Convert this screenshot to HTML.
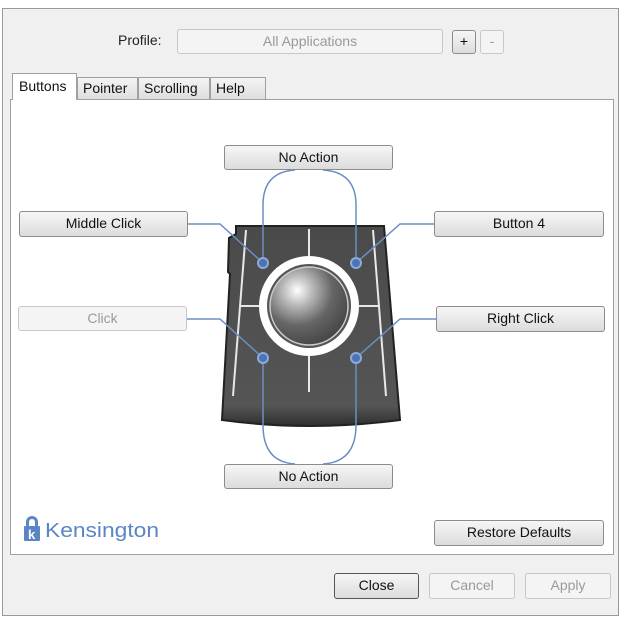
<!DOCTYPE html>
<html><head><style>
body{margin:0;width:624px;height:624px;background:#fff;font-family:"Liberation Sans",sans-serif;position:relative;overflow:hidden}
.win{position:absolute;left:2px;top:8px;width:617px;height:608px;background:#f0f0f0;border:1px solid #9a9a9a;box-sizing:border-box}
.panel{position:absolute;left:10px;top:99px;width:604px;height:456px;background:#fff;border:1px solid #a0a0a0;box-sizing:border-box}
.btn{position:absolute;box-sizing:border-box;border:1px solid #8c8c8c;border-radius:3px;background:linear-gradient(#f6f6f6,#dcdcdc);font-size:14px;color:#111;text-align:center;line-height:23px}
.dis{border-color:#c8c8c8;background:#f4f4f4;color:#9a9a9a}
.tab{position:absolute;top:77px;height:22px;box-sizing:border-box;border:1px solid #a0a0a0;border-bottom:none;background:linear-gradient(#f4f4f4,#dedede);font-size:14px;line-height:20px;padding-left:5px;color:#111}
.lbl{position:absolute;font-size:14px;color:#222}
</style></head><body>
<div class="win"></div>
<div class="lbl" style="left:118px;top:32px">Profile:</div>
<div class="btn dis" style="left:177px;top:29px;width:266px;height:25px;color:#999">All Applications</div>
<div class="btn" style="left:452px;top:30px;width:24px;height:24px;line-height:21px">+</div>
<div class="btn dis" style="left:480px;top:30px;width:24px;height:24px;line-height:21px">-</div>
<div class="panel"></div>
<div class="tab" style="left:77px;width:61px">Pointer</div>
<div class="tab" style="left:138px;width:72px">Scrolling</div>
<div class="tab" style="left:210px;width:56px">Help</div>
<div class="tab" style="left:12px;top:73px;height:27px;width:65px;background:#fff;padding-left:6px;line-height:24px">Buttons</div>
<svg style="position:absolute;left:0;top:0" width="624" height="624">
<defs>
<radialGradient id="ball" cx="0.35" cy="0.3" r="0.75"><stop offset="0" stop-color="#fff"/><stop offset="0.25" stop-color="#bbb"/><stop offset="0.6" stop-color="#666"/><stop offset="1" stop-color="#444"/></radialGradient>
<linearGradient id="body" x1="0" y1="0" x2="0" y2="1"><stop offset="0" stop-color="#4a4a4a"/><stop offset="0.9" stop-color="#555"/><stop offset="1" stop-color="#2e2e2e"/></linearGradient>
</defs>
<path d="M236 226 L384 226 L400 420 Q310 432 222 420 L230 274 L228 272 L229 238 L236 234 Z" fill="url(#body)" stroke="#222" stroke-width="2"/>
<g stroke="#e8e8e8" stroke-width="2" fill="none">
<line x1="246" y1="230" x2="233" y2="396"/><line x1="373" y1="230" x2="386" y2="396"/>
<line x1="309" y1="229" x2="309" y2="258"/><line x1="309" y1="354" x2="309" y2="392"/>
<line x1="240" y1="306" x2="260" y2="306"/><line x1="358" y1="306" x2="380" y2="306"/>
</g>
<circle cx="309" cy="306" r="50" fill="#fff"/>
<circle cx="309" cy="306" r="42" fill="#555"/>
<circle cx="309" cy="306" r="39" fill="url(#ball)" stroke="#ccc" stroke-width="1.5"/>
<g stroke="#6b8fc4" stroke-width="1.5" fill="none">
<path d="M188 224 L220 224 L263 263"/>
<path d="M187 319 L220 319 L263 358"/>
<path d="M434 224 L400 224 L356 263"/>
<path d="M436 319 L400 319 L356 358"/>
<path d="M263 263 L263 205 Q263 172 295 170"/>
<path d="M356 263 L356 205 Q356 172 323 170"/>
<path d="M263 358 L263 425 Q263 462 295 464"/>
<path d="M356 358 L356 425 Q356 462 323 464"/>
</g>
<g fill="#4a74b8" stroke="#8eaad6" stroke-width="2">
<circle cx="263" cy="263" r="5"/><circle cx="356" cy="263" r="5"/><circle cx="263" cy="358" r="5"/><circle cx="356" cy="358" r="5"/>
</g>
<g fill="#5b86c6">
<path d="M26 522 a6 6 0 0 1 12 0 v4 h-3 v-4 a3 3 0 0 0 -6 0 v4 h-3z"/>
<rect x="24" y="526" width="16" height="15" rx="1"/>
</g>
<text x="28" y="539" font-family="Liberation Sans" font-weight="bold" font-size="13" fill="#fff">k</text>
<text x="45" y="537" font-family="Liberation Sans" font-size="20" fill="#5b86c6" textLength="114" lengthAdjust="spacingAndGlyphs">Kensington</text>
</svg>
<div class="btn" style="left:224px;top:145px;width:169px;height:25px">No Action</div>
<div class="btn" style="left:19px;top:211px;width:169px;height:26px">Middle Click</div>
<div class="btn dis" style="left:18px;top:306px;width:169px;height:25px">Click</div>
<div class="btn" style="left:434px;top:211px;width:170px;height:26px">Button 4</div>
<div class="btn" style="left:436px;top:306px;width:169px;height:26px">Right Click</div>
<div class="btn" style="left:224px;top:464px;width:169px;height:25px">No Action</div>
<div class="btn" style="left:434px;top:520px;width:170px;height:26px">Restore Defaults</div>
<div class="btn" style="left:334px;top:573px;width:85px;height:26px;border-color:#555">Close</div>
<div class="btn dis" style="left:429px;top:573px;width:86px;height:26px">Cancel</div>
<div class="btn dis" style="left:525px;top:573px;width:86px;height:26px">Apply</div>
</body></html>
